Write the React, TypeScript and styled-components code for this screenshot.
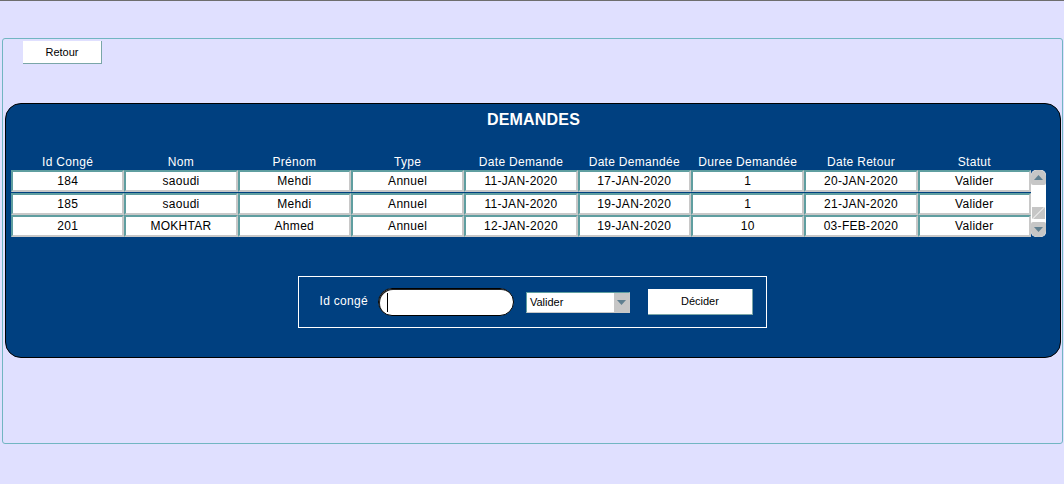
import React from "react";
import styled, { createGlobalStyle } from "styled-components";

const Global = createGlobalStyle`
  html, body { margin: 0; padding: 0; }
  body {
    background: #e0e0ff;
    border-top: 1px solid #6e6e6e;
    font-family: "Liberation Sans", Arial, sans-serif;
    height: 483px;
    overflow: hidden;
  }
`;

const Page = styled.div`
  padding: 37px 1px 0 2px;
`;

const Frame = styled.div`
  box-sizing: border-box;
  width: 1061px;
  height: 406px;
  border: 1px solid #72b6c2;
  border-radius: 3px;
  padding: 2px 1px 0 2px;
`;

const Retour = styled.button`
  box-sizing: border-box;
  margin-left: 18px;
  width: 79px;
  height: 23px;
  background: #fff;
  border: none;
  border-right: 1px solid #7aa6a8;
  border-bottom: 1px solid #7aa6a8;
  font-family: "Liberation Sans", Arial, sans-serif;
  font-size: 11px;
  color: #000;
  padding: 0;
  display: block;
`;

const Panel = styled.div`
  box-sizing: border-box;
  margin-top: 39px;
  width: 1056px;
  height: 255px;
  background: #004080;
  border: 1px solid #000;
  border-radius: 16px;
  padding: 6px 0 0 5px;
  display: flex;
  flex-direction: column;
`;

const Title = styled.div`
  color: #fff;
  font-weight: bold;
  font-size: 16px;
  text-align: center;
  width: 1045px;
  line-height: 20px;
  letter-spacing: 0.2px;
`;

const TableWrap = styled.div`
  margin-top: 24px;
  display: flex;
  align-items: flex-end;
`;

const Grid = styled.div`
  width: 1020px;
  display: grid;
  grid-template-columns: repeat(9, 1fr);
`;

const Head = styled.div`
  color: #fff;
  font-size: 12px;
  letter-spacing: 0.3px;
  text-align: center;
  height: 16px;
  line-height: 16px;
`;

const Cell = styled.div`
  box-sizing: border-box;
  height: 22px;
  margin-bottom: 0.5px;
  background: #fff;
  border-top: 2px solid #5f9ea0;
  border-left: 2px solid #5f9ea0;
  border-right: 2px solid #c8c8c8;
  border-bottom: 2px solid #c8c8c8;
  font-size: 12px;
  letter-spacing: 0.3px;
  color: #000;
  text-align: center;
  line-height: 19px;
`;

const Scroll = styled.div`
  box-sizing: border-box;
  width: 15px;
  height: 67px;
  margin-bottom: 0.5px;
  background: #fff;
  border-radius: 5px;
  display: flex;
  flex-direction: column;
  justify-content: space-between;
  align-items: center;
`;

const Arrow = styled.div<{ $up?: boolean }>`
  width: 15px;
  height: 15px;
  background: #c6c6c6;
  border-radius: ${(p) => (p.$up ? "6px 6px 2px 2px" : "2px 2px 6px 6px")};
  display: flex;
  align-items: center;
  justify-content: center;
`;

const Thumb = styled.div`
  width: 13px;
  height: 12px;
  margin-top: 18px;
  background: linear-gradient(135deg, #c6c6c6 45%, #f4f4f4 50%, #c6c6c6 55%);
`;

const FormBox = styled.div`
  box-sizing: border-box;
  align-self: center;
  margin-top: 38px;
  margin-left: -7px;
  width: 469px;
  height: 52px;
  border: 1px solid #fff;
  display: flex;
  align-items: center;
  padding-left: 21px;
`;

const Label = styled.span`
  color: #fff;
  font-size: 12px;
  letter-spacing: 0.3px;
  margin-right: 10px;
  margin-top: -2px;
`;

const Input = styled.div`
  box-sizing: border-box;
  width: 136px;
  height: 28px;
  border: 1px solid #000;
  box-shadow: inset 1px 1px 0 #222;
  border-radius: 14px;
  background: #fff;
  padding-left: 8px;
  display: flex;
  align-items: center;
  margin-top: 1px;
`;

const Caret = styled.div`
  width: 1px;
  height: 19px;
  background: #000;
`;

const Select = styled.div`
  box-sizing: border-box;
  margin-left: 12px;
  width: 104px;
  height: 21px;
  border: 1px solid #5f9ea0;
  border-right-color: #c8c8c8;
  border-bottom-color: #c8c8c8;
  background: #fff;
  display: flex;
  align-items: stretch;
  font-size: 11px;
  margin-top: 2px;
`;

const SelectText = styled.span`
  flex: 1;
  padding-left: 3px;
  line-height: 19px;
`;

const SelectBtn = styled.div`
  width: 15px;
  background: #c6c6c6;
  display: flex;
  align-items: center;
  justify-content: center;
`;

const Decider = styled.button`
  box-sizing: border-box;
  margin-left: 18px;
  width: 105px;
  height: 26px;
  background: #fff;
  border: none;
  border-right: 1px solid #7aa6a8;
  border-bottom: 1px solid #7aa6a8;
  font-family: "Liberation Sans", Arial, sans-serif;
  font-size: 11px;
  color: #000;
  padding: 0;
`;

const heads = [
  "Id Congé",
  "Nom",
  "Prénom",
  "Type",
  "Date Demande",
  "Date Demandée",
  "Duree Demandée",
  "Date Retour",
  "Statut",
];

const rows = [
  ["184", "saoudi", "Mehdi", "Annuel", "11-JAN-2020", "17-JAN-2020", "1", "20-JAN-2020", "Valider"],
  ["185", "saoudi", "Mehdi", "Annuel", "11-JAN-2020", "19-JAN-2020", "1", "21-JAN-2020", "Valider"],
  ["201", "MOKHTAR", "Ahmed", "Annuel", "12-JAN-2020", "19-JAN-2020", "10", "03-FEB-2020", "Valider"],
];

const Tri = ({ up, color = "#5f7f90" }: { up?: boolean; color?: string }) => (
  <svg width="9" height="5" viewBox="0 0 9 5">
    <polygon points={up ? "0,5 9,5 4.5,0" : "0,0 9,0 4.5,5"} fill={color} />
  </svg>
);

export default function App() {
  return (
    <>
      <Global />
      <Page>
        <Frame>
          <Retour>Retour</Retour>
          <Panel>
            <Title>DEMANDES</Title>
            <TableWrap>
              <Grid>
                {heads.map((h) => (
                  <Head key={h}>{h}</Head>
                ))}
                {rows.map((r, i) => r.map((c, j) => <Cell key={i + "-" + j}>{c}</Cell>))}
              </Grid>
              <Scroll>
                <Arrow $up>
                  <Tri up />
                </Arrow>
                <Thumb />
                <Arrow>
                  <Tri />
                </Arrow>
              </Scroll>
            </TableWrap>
            <FormBox>
              <Label>Id congé</Label>
              <Input>
                <Caret />
              </Input>
              <Select>
                <SelectText>Valider</SelectText>
                <SelectBtn>
                  <Tri />
                </SelectBtn>
              </Select>
              <Decider>Décider</Decider>
            </FormBox>
          </Panel>
        </Frame>
      </Page>
    </>
  );
}
